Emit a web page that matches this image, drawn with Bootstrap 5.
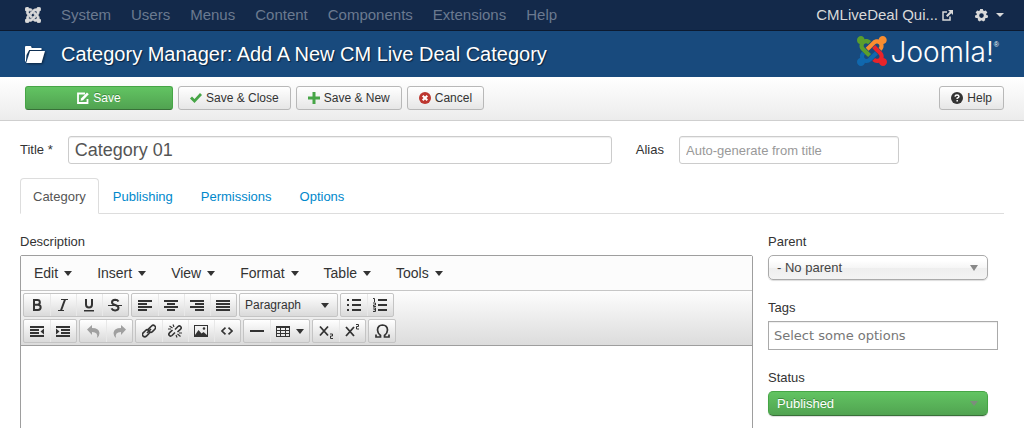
<!DOCTYPE html>
<html lang="en">
<head>
<meta charset="utf-8">
<meta name="viewport" content="width=device-width, initial-scale=1">
<title>Category Manager: Add A New CM Live Deal Category</title>
<link href="https://cdn.jsdelivr.net/npm/bootstrap@5.3.0/dist/css/bootstrap.min.css" rel="stylesheet">
<style>
  :root { --link: #08c; --line: #ddd; --frame: #9e9e9e; }
  body { font-family: "Liberation Sans", Arial, sans-serif; font-size: 13px; line-height: 18px; color: #333; background: #fff; }
  svg { display: block; flex: none; fill: currentColor; }
  button { font-family: inherit; color: inherit; }

  /* top menu bar */
  .topbar { height: 31px; padding: 0 20px 0 25px; background: #13294a; border-bottom: 1px solid #0c1a30; font-size: 15px; --bs-navbar-padding-y: 0; --bs-navbar-nav-link-padding-x: 10px; }
  .topbar .nav-link { padding-top: 0; padding-bottom: 0; color: #6b7a90; line-height: 30px; }
  .topbar .navbar-nav { margin-left: 10px; }
  .topbar .brand-mark { color: #d9d9d9; }
  .topbar .site-link, .topbar .gear { color: #d9d9d9; text-decoration: none; }
  .topbar .site-link { margin-right: 22px; }
  .caret { width: 0; height: 0; border: 4px solid transparent; border-top-color: currentColor; border-bottom: 0; }
  .menus .caret, .tool-set .caret { border-width: 5px 4px 0; }

  /* page heading */
  .heading { height: 46px; padding: 0 25px; background: #184a7d; color: #fff; }
  .heading h1 { font-size: 20px; line-height: 24px; font-weight: 400; text-shadow: 1px 1px 1px #0b2440; }
  .heading .folder { filter: drop-shadow(1px 1px 1px #0b2440); }
  .logo { margin-bottom: 6px; }
  .wordmark { font: 300 28px/30px Inter, "DejaVu Sans", sans-serif; padding-top: 2px; }
  .wordmark sup { font: 7px/7px "Liberation Sans", sans-serif; top: -15px; }

  /* action buttons */
  .actions { padding: 9px 20px 10px 25px; background: linear-gradient(#fff, #ececec); border-bottom: 1px solid #cfcfcf; }
  .act-group { gap: 5px; }
  .act { height: 24px; padding: 0 11px; font-size: 12px; line-height: 16px; color: #333; border: 1px solid #b8b8b8; border-radius: 3px; background: linear-gradient(#fff, #e6e6e6); display: flex; align-items: center; justify-content: center; gap: 4px; }
  .act:hover { color: #333; background: #e6e6e6; }
  .act-save, .act-save:hover { width: 148px; color: #fff; border-color: #46a546 #46a546 #387038; background: linear-gradient(#62c462, #51a351); text-shadow: 0 -1px 0 #3d8b3d; }
  .ok { color: #46a546; }
  .stop { color: #bd362f; }

  /* form controls */
  .title-row { padding: 15px 105px 0 0; }
  .title-row label { margin-right: 15px; }
  .title-row .alias-label { margin-left: 24px; }
  .field, .pick { border: 1px solid #ccc; border-radius: 3px; padding: 0 6px; height: 28px; color: #555; font-size: 13px; background-color: #fff; box-shadow: inset 0 1px 1px #eee; }
  .field::placeholder { color: #999; opacity: 1; }
  .title-field { font-size: 18px; }
  .alias-field { width: 220px; }
  .tag-field { width: 230px; height: 29px; padding: 0 5px; border-color: #aaa; border-radius: 0; font-family: "DejaVu Sans", sans-serif; }
  .tag-field::placeholder { color: #777; }
  .pick { width: 220px; height: 25px; padding: 1px 8px 0; appearance: none; color: #444; border-color: #aaa; border-radius: 5px; box-shadow: 0 1px 1px #ddd;
    background: url("data:image/svg+xml,%3Csvg xmlns='http://www.w3.org/2000/svg' width='8' height='6'%3E%3Cpath d='M0 0h8L4 6z' fill='%23888'/%3E%3C/svg%3E") no-repeat right 9px top 9px, linear-gradient(#fff 20%, #f6f6f6 50%, #eee 52%, #f4f4f4); }
  .pick-on { color: #fff; border-color: #46a546 #46a546 #387038; text-shadow: 0 -1px 0 #3d8b3d;
    background: url("data:image/svg+xml,%3Csvg xmlns='http://www.w3.org/2000/svg' width='8' height='5'%3E%3Cpath d='M0 0h8L4 5z' fill='%237d8d7d'/%3E%3C/svg%3E") no-repeat right 9px top 9px, linear-gradient(#62c462, #51a351); }

  /* tabs */
  .nav-tabs { --bs-nav-tabs-border-color: #ddd; --bs-nav-tabs-border-radius: 4px; gap: 1px; margin-top: 14px; }
  .nav-tabs .nav-link { padding: 9px 12px 7px; color: var(--link); }
  .nav-tabs .nav-item + .nav-item .nav-link { padding-right: 13px; }
  .nav-tabs .nav-link.active { color: #555; border-color: #ddd #ddd #fff; }

  /* rich text editor */
  .split { gap: 15px; margin-top: 19px; }
  .side { width: 236px; }
  .side > div + div { margin-top: 19px; }
  .side label, .desc-label { display: block; margin-bottom: 4px; }
  .editor { border: 1px solid var(--frame); border-radius: 2px 2px 0 0; }
  .menus { height: 35px; padding-left: 13px; gap: 25px; background: #fcfcfc; border-bottom: 1px solid #c6c6c6; font-size: 14px; }
  .menus button { border: 0; padding: 0; background: none; display: flex; align-items: center; gap: 6px; }
  .tools { padding: 2px; gap: 2px; background: linear-gradient(#fdfdfd, #dcdcdc); border-bottom: 1px solid var(--frame); }
  .tool-row { display: flex; gap: 2px; flex-wrap: wrap; }
  .tool-set { display: flex; border: 1px solid #c4c4c4; border-radius: 2px; background: linear-gradient(#fff, #dadada); }
  .tool-set button { width: 26px; height: 22px; padding: 0; border: 0; background: none; display: flex; align-items: center; justify-content: center; gap: 6px; }
  .tool-set button + button { box-shadow: inset 1px 0 #e8e8e8; }
  .tool-set .format { width: 97px; padding: 0 8px 0 5px; justify-content: space-between; font-size: 12px; }
  .tool-set .wide { width: 39px; }
  .tool-set button:disabled { color: #a0a0a0; }
  .writing { display: block; width: 100%; height: 240px; border: 0; resize: none; padding: 8px; }
</style>
</head>
<body>

<svg width="0" height="0" class="position-absolute" aria-hidden="true">
  <defs>
    <path id="joomla-sw" d="M16.719 14.759L14.220 17.260l-2.370 2.370-.462.466c-1.368 1.365-3.297 1.830-5.047 1.397-.327 1.424-1.604 2.490-3.130 2.490C1.438 23.983 0 22.547 0 20.772c0-1.518 1.055-2.789 2.469-3.123-.446-1.760.016-3.705 1.396-5.080l.179-.180 2.370 2.370-.184.181c-.769.779-.769 2.024 0 2.789.771.780 2.022.780 2.787 0l.465-.465 2.367-2.371 2.502-2.506z"/>
    <path id="joomla-se" d="M17.643 21.411c-1.822.563-3.885.120-5.328-1.318l-.180-.185 2.365-2.369.180.184c.771.768 2.018.768 2.787 0 .765-.765.769-2.010-.004-2.781l-.466-.465-2.365-2.370-2.502-2.503 2.370-2.369 2.499 2.505 2.367 2.370.464.464c1.365 1.360 1.846 3.278 1.411 5.021 1.560.224 2.759 1.560 2.759 3.180 0 1.784-1.439 3.210-3.209 3.210-1.545 0-2.851-1.096-3.135-2.565z"/>
    <path id="joomla-ne" d="M6.975 9.461L9.480 6.950l2.366-2.370.462-.450c1.365-1.365 3.301-1.830 5.055-1.396.252-1.541 1.590-2.714 3.195-2.714 1.784 0 3.225 1.425 3.225 3.209 0 1.605-1.168 2.950-2.697 3.191.539 1.801.090 3.840-1.335 5.265l-.179.181-2.370-2.370.180-.166c.770-.765.770-2.010 0-2.775-.765-.766-2.010-.766-2.775 0l-.465.465-2.370 2.369-2.505 2.496z"/>
    <path id="joomla-nw" d="M5.971 2.598c1.756-.450 3.703.016 5.080 1.395l.181.181-2.370 2.370-.181-.181c-.770-.770-2.016-.770-2.785 0-.769.769-.769 2.010 0 2.785l.465.465 2.370 2.370 2.505 2.505-2.370 2.370-2.505-2.504-2.370-2.370-.465-.466c-1.411-1.380-1.861-3.360-1.350-5.130C.915 6.136 0 4.830 0 3.209 0 1.441 1.440 0 3.209 0c1.500 0 2.600 1.020 2.762 2.598z"/>
  </defs>
</svg>

<nav class="topbar navbar navbar-expand flex-nowrap">
  <a class="brand-mark" href="#" aria-label="Control panel">
    <svg width="16" height="16" viewBox="0 0 24 24" stroke="currentColor"><use href="#joomla-sw"/><use href="#joomla-se"/><use href="#joomla-ne"/><use href="#joomla-nw"/></svg>
  </a>
  <ul class="navbar-nav me-auto">
    <li class="nav-item"><a class="nav-link" href="#">System</a></li>
    <li class="nav-item"><a class="nav-link" href="#">Users</a></li>
    <li class="nav-item"><a class="nav-link" href="#">Menus</a></li>
    <li class="nav-item"><a class="nav-link" href="#">Content</a></li>
    <li class="nav-item"><a class="nav-link" href="#">Components</a></li>
    <li class="nav-item"><a class="nav-link" href="#">Extensions</a></li>
    <li class="nav-item"><a class="nav-link" href="#">Help</a></li>
  </ul>
  <a class="site-link d-flex align-items-center gap-1" href="#">CMLiveDeal Qui...
    <svg width="11" height="11" viewBox="0 0 11 11"><path d="M5 2H1v8h7V6.500" fill="none" stroke="currentColor" stroke-width="1.500"/><path d="M6 0h5v5L9.300 3.300 5.500 7.100 4 5.600l3.800-3.900z"/></svg>
  </a>
  <a class="gear d-flex align-items-center gap-2" href="#" aria-label="Settings">
    <svg width="13" height="13" viewBox="0 0 13 13"><path fill-rule="evenodd" d="M5.200 0h2.600l.4 1.600 1 .5 1.600-.6 1.600 2-1.200 1.300.1 1.200 1.700.5v.9l-.6 1.700-1.600-.2-.8.8.2 1.600-2 1.200-1.200-1.100h-1L4.800 12.500l-2-1.200.2-1.600-.8-.8-1.600.2L0 7.400v-.9L1.700 6l.1-1.200L.6 3.500l1.600-2 1.600.6 1-.5zM6.500 4.300a2.300 2.300 0 1 0 0 4.600 2.300 2.300 0 0 0 0-4.600z"/></svg>
    <span class="caret"></span>
  </a>
</nav>

<header class="heading d-flex align-items-center">
  <svg class="folder" width="20" height="17" viewBox="0 0 20 17"><path d="M0 1Q0 0 1 0h4.500q.8 0 1.200 2h9.800v2H4.200L1.500 9 .8 16 0 15z"/><path d="M5 5h15l-3.500 12H1.200z"/></svg>
  <h1 class="mb-0 ms-3 me-auto">Category Manager: Add A New CM Live Deal Category</h1>
  <a class="logo d-flex align-items-center gap-1 text-white text-decoration-none" href="#">
    <svg width="30" height="30" viewBox="0 0 24 24">
      <use href="#joomla-sw" fill="#1068ae"/>
      <use href="#joomla-se" fill="#e8242a"/>
      <use href="#joomla-ne" fill="#f98d30"/>
      <use href="#joomla-nw" fill="#5a9e2d"/>
    </svg>
    <span class="wordmark">Joomla!<sup>®</sup></span>
  </a>
</header>

<div class="actions d-flex flex-wrap">
  <div class="act-group d-flex flex-wrap me-auto">
    <button type="button" class="btn act act-save"><svg width="12" height="12" viewBox="0 0 12 12"><path d="M8 1.500H1v9.500h9.500V7" fill="none" stroke="currentColor" stroke-width="1.800"/><path d="M4 6.500L10 .5 11.800 2.300 6 8.200 3.600 8.800z"/></svg>Save</button>
    <button type="button" class="btn act"><svg class="ok" width="12" height="10" viewBox="0 0 12 10"><path d="M0 5.500L2 3.500l2.500 2.400L10 0l2 2-7.500 8z"/></svg>Save &amp; Close</button>
    <button type="button" class="btn act"><svg class="ok" width="12" height="12" viewBox="0 0 12 12"><path d="M4.500 0h3v4.500H12v3H7.500V12h-3V7.500H0v-3h4.500z"/></svg>Save &amp; New</button>
    <button type="button" class="btn act"><svg class="stop" width="12" height="12" viewBox="0 0 12 12"><circle cx="6" cy="6" r="6"/><path d="M3.700 3.700l4.600 4.600M8.300 3.700L3.700 8.300" stroke="#fff" stroke-width="2"/></svg>Cancel</button>
  </div>
  <button type="button" class="btn act"><svg width="12" height="12" viewBox="0 0 12 12"><circle cx="6" cy="6" r="6"/><path d="M4 4.600Q4.200 3 6 3t2 1.500Q8 5.500 6.200 6.200v.8M6.200 8v1.500" fill="none" stroke="#fff" stroke-width="1.500"/></svg>Help</button>
</div>

<main class="px-3 mx-1">
  <form>
    <div class="title-row d-flex align-items-center">
      <label for="title">Title *</label>
      <input id="title" class="field title-field flex-grow-1" type="text" value="Category 01">
      <label for="alias" class="alias-label">Alias</label>
      <input id="alias" class="field alias-field" type="text" placeholder="Auto-generate from title">
    </div>

    <ul class="nav nav-tabs">
      <li class="nav-item"><a class="nav-link active" aria-current="page" href="#">Category</a></li>
      <li class="nav-item"><a class="nav-link" href="#">Publishing</a></li>
      <li class="nav-item"><a class="nav-link" href="#">Permissions</a></li>
      <li class="nav-item"><a class="nav-link" href="#">Options</a></li>
    </ul>

    <div class="split d-flex">
      <div class="flex-grow-1">
        <label class="desc-label" for="description">Description</label>
        <div class="editor">
          <div class="menus d-flex align-items-center">
            <button type="button">Edit<span class="caret"></span></button>
            <button type="button">Insert<span class="caret"></span></button>
            <button type="button">View<span class="caret"></span></button>
            <button type="button">Format<span class="caret"></span></button>
            <button type="button">Table<span class="caret"></span></button>
            <button type="button">Tools<span class="caret"></span></button>
          </div>
          <div class="tools d-flex flex-column">
            <div class="tool-row">
              <div class="tool-set">
                <button type="button" aria-label="Bold"><svg width="14" height="14" viewBox="0 0 14 14"><path d="M4 2h3.500a2.300 2.300 0 0 1 0 4.700H4zM4 6.700h4a2.500 2.500 0 0 1 0 5.300H4z" fill="none" stroke="currentColor" stroke-width="2"/></svg></button>
                <button type="button" aria-label="Italic"><svg width="14" height="14" viewBox="0 0 14 14"><path d="M5 1.500h7M2 12.500h6" fill="none" stroke="currentColor" stroke-width="1.200"/><path d="M9 1.500l-4 11" stroke="currentColor" stroke-width="2"/></svg></button>
                <button type="button" aria-label="Underline"><svg width="14" height="14" viewBox="0 0 14 14"><path d="M4 1v5.500a3 3 0 0 0 6 0V1" fill="none" stroke="currentColor" stroke-width="2"/><path d="M2 12h10v1.500H2z"/></svg></button>
                <button type="button" aria-label="Strikethrough"><svg width="14" height="14" viewBox="0 0 14 14"><path d="M10.500 3.500Q9.500 1.700 7.200 1.700 4 1.800 4 4.200q0 2 3.200 2.800 3.400 1 3.300 3-.2 2.500-3.500 2.400-2.500 0-3.500-2" fill="none" stroke="currentColor" stroke-width="2"/><path d="M0 7h14v1H0z"/></svg></button>
              </div>
              <div class="tool-set">
                <button type="button" aria-label="Align left"><svg width="14" height="11" viewBox="0 0 14 11"><path d="M0 0h14v2H0zM0 3h9v2H0zM0 6h14v2H0zM0 9h9v2H0z"/></svg></button>
                <button type="button" aria-label="Align centre"><svg width="14" height="11" viewBox="0 0 14 11"><path d="M0 0h14v2H0zM3 3h8v2H3zM0 6h14v2H0zM3 9h8v2H3z"/></svg></button>
                <button type="button" aria-label="Align right"><svg width="14" height="11" viewBox="0 0 14 11"><path d="M0 0h14v2H0zM5 3h9v2H5zM0 6h14v2H0zM5 9h9v2H5z"/></svg></button>
                <button type="button" aria-label="Justify"><svg width="14" height="11" viewBox="0 0 14 11"><path d="M0 0h14v2H0zM0 3h14v2H0zM0 6h14v2H0zM0 9h14v2H0z"/></svg></button>
              </div>
              <div class="tool-set"><button type="button" class="format">Paragraph<span class="caret"></span></button></div>
              <div class="tool-set">
                <button type="button" aria-label="Bullet list"><svg width="14" height="12" viewBox="0 0 14 12"><path d="M0 0h2v2H0zM5 0h9v2H5zM0 5h2v2H0zM5 5h9v2H5zM0 10h2v2H0zM5 10h9v2H5z"/></svg></button>
                <button type="button" aria-label="Numbered list"><svg width="14" height="14" viewBox="0 0 14 14"><path d="M5 1h9v2H5zM5 6h9v2H5zM5 11h9v2H5z"/><path d="M0 .5h1.500V4M0 5h2.500v2H.5v1.500H3M0 10h2.500v3.500H0M.5 11.700h2" fill="none" stroke="currentColor"/></svg></button>
              </div>
            </div>
            <div class="tool-row">
              <div class="tool-set">
                <button type="button" aria-label="Decrease indent"><svg width="14" height="11" viewBox="0 0 14 11"><path d="M0 0h14v2H0zM0 3h9v2H0zM0 6h9v2H0zM0 9h14v2H0zM14 2.500v6L10.500 5.500z"/></svg></button>
                <button type="button" aria-label="Increase indent"><svg width="14" height="11" viewBox="0 0 14 11"><path d="M0 0h14v2H0zM5 3h9v2H5zM5 6h9v2H5zM0 9h14v2H0zM0 2.500v6L3.500 5.500z"/></svg></button>
              </div>
              <div class="tool-set">
                <button type="button" aria-label="Undo" disabled><svg width="13" height="13" viewBox="0 0 13 13"><path d="M0 4.500L5 0v3q7 0 7.500 5 0 3-2.500 5 1.500-6-5-6v3z"/></svg></button>
                <button type="button" aria-label="Redo" disabled><svg width="13" height="13" viewBox="0 0 13 13"><path d="M13 4.500L8 0v3Q1 3 .5 8q0 3 2.500 5-1.500-6 5-6v3z"/></svg></button>
              </div>
              <div class="tool-set">
                <button type="button" aria-label="Link"><svg width="14" height="14" viewBox="0 0 14 14"><g fill="none" stroke="currentColor" stroke-width="1.600"><rect x="6" y="2.500" width="8" height="4.600" rx="2.300" transform="rotate(-45 10 4.800)"/><rect x="0" y="7" width="8" height="4.600" rx="2.300" transform="rotate(-45 4 9.300)"/><path d="M5 9l4-4"/></g></svg></button>
                <button type="button" aria-label="Remove link"><svg width="14" height="14" viewBox="0 0 14 14"><g fill="none" stroke="currentColor" stroke-width="1.600"><path d="M7 5.500l3-3q1.400-1.200 2.600 0t0 2.600L9.500 8M7 8.500l-3 3q-1.400 1.200-2.600 0t0-2.600L4.500 6"/><path d="M1.500 2l3 2M5 .5L6 3M9.500 10l3 2.500M8 11l1 2.500M0 5h3M11 9h3" stroke-width="1.200"/></g></svg></button>
                <button type="button" aria-label="Image"><svg width="14" height="12" viewBox="0 0 14 12"><path fill-rule="evenodd" d="M0 0h14v12H0zM1 1v9l3.500-5L7.500 8.500l2-1.500L13 10V1zM10 2.200a1.300 1.300 0 1 1 0 2.600 1.300 1.300 0 0 1 0-2.600z"/></svg></button>
                <button type="button" aria-label="Source code"><svg width="12" height="8" viewBox="0 0 12 8"><path d="M4.500 .6L1 4l3.500 3.400M7.500 .6L11 4 7.500 7.400" fill="none" stroke="currentColor" stroke-width="1.600"/></svg></button>
              </div>
              <div class="tool-set">
                <button type="button" aria-label="Horizontal line"><svg width="14" height="2" viewBox="0 0 14 2"><path d="M0 0h14v2H0z"/></svg></button>
                <button type="button" class="wide" aria-label="Table"><svg width="14" height="11" viewBox="0 0 14 11"><path fill-rule="evenodd" d="M0 0h14v11H0zM1 2v2h3V2zM5 2v2h4V2zM10 2v2h3V2zM1 5v2h3V5zM5 5v2h4V5zM10 5v2h3V5zM1 8v2h3V8zM5 8v2h4V8zM10 8v2h3V8z"/></svg><span class="caret"></span></button>
              </div>
              <div class="tool-set">
                <button type="button" aria-label="Subscript"><svg width="15" height="15" viewBox="0 0 15 15"><path d="M1 2.500l8 9M9 2.500l-8 9" stroke="currentColor" stroke-width="1.800"/><path d="M11 10h2.500v2h-2v2.500H14" fill="none" stroke="currentColor"/></svg></button>
                <button type="button" aria-label="Superscript"><svg width="15" height="15" viewBox="0 0 15 15"><path d="M1 3l8 9M9 3l-8 9" stroke="currentColor" stroke-width="1.800"/><path d="M11 .5h2.500v2h-2V5H14" fill="none" stroke="currentColor"/></svg></button>
              </div>
              <div class="tool-set">
                <button type="button" aria-label="Special character"><svg width="15" height="14" viewBox="0 0 15 14"><path d="M1 10.500v2.500h4.500v-1.500Q2.500 9 2.500 6q.2-4.800 5-5 4.800.2 5 5 0 3-3 5.500V13H14v-2.500" fill="none" stroke="currentColor" stroke-width="1.700"/></svg></button>
              </div>
            </div>
          </div>
          <textarea class="writing" id="description"></textarea>
        </div>
      </div>

      <div class="side flex-shrink-0">
        <div>
          <label for="parent">Parent</label>
          <select id="parent" class="pick"><option>- No parent</option></select>
        </div>
        <div>
          <label for="tags">Tags</label>
          <input id="tags" class="field tag-field" type="text" placeholder="Select some options">
        </div>
        <div>
          <label for="status">Status</label>
          <select id="status" class="pick pick-on"><option>Published</option></select>
        </div>
      </div>
    </div>
  </form>
</main>

<script src="https://cdn.jsdelivr.net/npm/bootstrap@5.3.0/dist/js/bootstrap.bundle.min.js"></script>
</body>
</html>
